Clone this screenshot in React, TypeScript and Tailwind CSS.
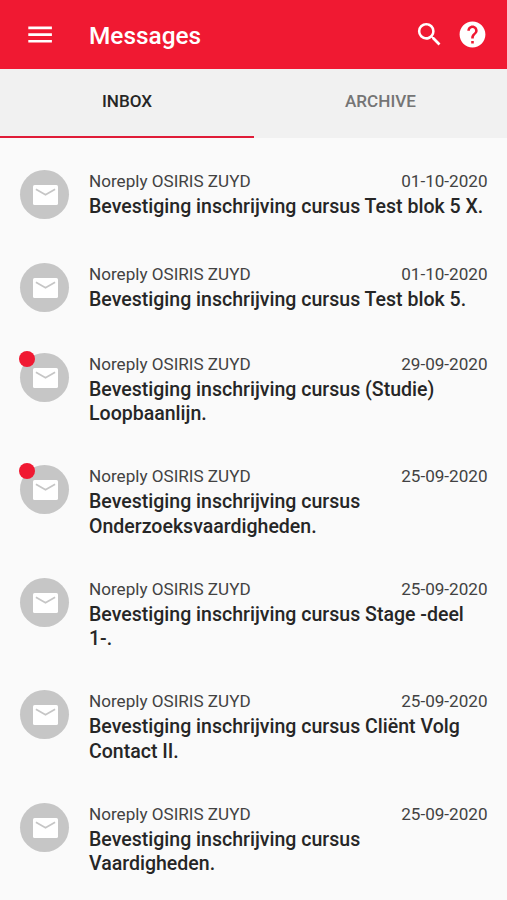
import React from 'react';
import { MdSearch, MdHelp } from 'react-icons/md';

type Message = { date: string; lines: string[]; unread?: boolean; height: string };

const messages: Message[] = [
  { date: '01-10-2020', lines: ['Bevestiging inschrijving cursus Test blok 5 X.'], height: 'h-[93px]' },
  { date: '01-10-2020', lines: ['Bevestiging inschrijving cursus Test blok 5.'], height: 'h-[90.5px]' },
  { date: '29-09-2020', lines: ['Bevestiging inschrijving cursus (Studie)', 'Loopbaanlijn.'], unread: true, height: 'h-[112.4px]' },
  { date: '25-09-2020', lines: ['Bevestiging inschrijving cursus', 'Onderzoeksvaardigheden.'], unread: true, height: 'h-[112.4px]' },
  { date: '25-09-2020', lines: ['Bevestiging inschrijving cursus Stage -deel', '1-.'], height: 'h-[112.4px]' },
  { date: '25-09-2020', lines: ['Bevestiging inschrijving cursus Cliënt Volg', 'Contact II.'], height: 'h-[112.4px]' },
  { date: '25-09-2020', lines: ['Bevestiging inschrijving cursus', 'Vaardigheden.'], height: 'h-[93px]' },
];

function MenuIcon() {
  return (
    <svg width="24" height="18" viewBox="0 0 24 18" fill="currentColor" aria-hidden="true">
      <path d="M.3.5h23.6v2.7H.3zM.3 7.2h23.6v2.7H.3zM.3 13.9h23.6v2.7H.3z" />
    </svg>
  );
}

function EnvelopeIcon() {
  return (
    <svg width="25" height="20" viewBox="0 0 25 20" aria-hidden="true">
      <rect width="25" height="20" rx="1.6" fill="#fff" />
      <path d="M2.9 4.2 12.5 9.8l9.6-5.6" fill="none" stroke="#c6c6c6" strokeWidth="1.7" />
    </svg>
  );
}

function MessageRow({ message }: { message: Message }) {
  return (
    <li className={`flex shrink-0 pl-5 pr-[19.5px] ${message.height}`}>
      <div className="relative mr-5 flex h-[49px] w-[49px] shrink-0 items-center justify-center rounded-full bg-[#c6c6c6] pl-px pt-px">
        <EnvelopeIcon />
        {message.unread && <span className="absolute -left-px -top-[2px] h-4 w-4 rounded-full bg-[#f01932]" />}
      </div>
      <div className="min-w-0 flex-1">
        <div className="flex justify-between pb-0.5 text-[17.1px] leading-[22px] text-[#424242]">
          <span>Noreply OSIRIS ZUYD</span>
          <span>{message.date}</span>
        </div>
        <div className="whitespace-nowrap pt-px text-[19.55px] font-medium leading-[24.4px] text-[#262626]">
          {message.lines.map((line) => <div key={line}>{line}</div>)}
        </div>
      </div>
    </li>
  );
}

export default function App() {
  return (
    <div className="flex h-[900px] w-[507px] flex-col overflow-hidden bg-[#fafafa] font-['Roboto',sans-serif]">
      <header className="flex h-[69px] shrink-0 items-center bg-[#f01932] pl-[28px] pr-[19px] text-white">
        <MenuIcon />
        <h1 className="ml-[37px] flex-1 pt-[3px] text-[24.4px] font-medium">Messages</h1>
        <MdSearch size={31} className="mr-3" />
        <MdHelp size={31} />
      </header>
      <nav className="flex h-[69px] shrink-0 bg-[#f1f1f1] text-[17.1px] font-medium">
        <button className="w-[254px] border-b-2 border-[#e01c38] pb-0.5 text-[#262626]">INBOX</button>
        <button className="flex-1 pb-1 text-[#757575]">ARCHIVE</button>
      </nav>
      <ul className="flex flex-col pt-[31.5px]">
        {messages.map((message, index) => <MessageRow key={index} message={message} />)}
      </ul>
    </div>
  );
}
